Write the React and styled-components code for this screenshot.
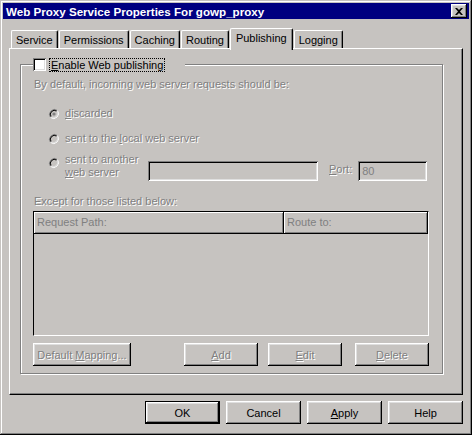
import React from "react";
import styled, { createGlobalStyle } from "styled-components";

const FACE = "#c6c3c0";
const SHADOW = "#808080";
const LIGHT = "#dfdfdf";

const Global = createGlobalStyle`
  html, body {
    margin: 0;
    padding: 0;
    background: ${FACE};
  }
  * {
    box-sizing: border-box;
  }
  body {
    font-family: "Liberation Sans", Arial, sans-serif;
    font-size: 11px;
    color: #000;
  }
`;

const Frame = styled.div`
  width: 472px;
  height: 435px;
  padding: 3px;
  background: ${FACE};
  display: flex;
  flex-direction: column;
  box-shadow: inset -1px -1px #000, inset 1px 1px ${FACE},
    inset -2px -2px ${SHADOW}, inset 2px 2px #fff;
`;

const TitleBar = styled.div`
  height: 18px;
  background: #000080;
  display: flex;
  align-items: center;
  justify-content: space-between;
  padding: 0 2px 0 3px;
`;

const Title = styled.span`
  color: #fff;
  font-weight: bold;
  font-size: 11.6px;
`;

const CloseBox = styled.div`
  width: 16px;
  height: 14px;
  background: ${FACE};
  display: flex;
  align-items: center;
  justify-content: center;
  box-shadow: inset -1px -1px #000, inset 1px 1px #fff,
    inset -2px -2px ${SHADOW}, inset 2px 2px ${LIGHT};
`;

const Body = styled.div`
  flex: 1;
  display: flex;
  flex-direction: column;
  padding: 8px 6px 8px 6px;
`;

const TabStrip = styled.div`
  display: flex;
  align-items: flex-end;
  padding-left: 2px;
  height: 21px;
  position: relative;
  z-index: 1;
`;

const Tab = styled.div`
  height: ${p => (p.$active ? 22 : 18)}px;
  margin: 0 ${p => (p.$active ? 1 : 1)}px -${p => (p.$active ? 2 : 0)}px 0;
  padding: ${p => (p.$active ? "3px 5px 0 5px" : "1px 4px 0 4px")};
  background: ${FACE};
  display: flex;
  align-items: ${p => (p.$active ? "flex-start" : "center")};
  border-left: 1px solid #fff;
  border-top: 1px solid #fff;
  border-right: 1px solid #000;
  border-top-left-radius: 2px;
  border-top-right-radius: 2px;
  box-shadow: inset -1px 0 ${SHADOW};
  white-space: nowrap;
`;

const Panel = styled.div`
  height: 347px;
  border: 1px solid;
  border-color: #fff #000 #000 #fff;
  box-shadow: inset -1px -1px ${SHADOW};
  padding: 9px 20px 0 10px;
`;

const Group = styled.fieldset`
  margin: 0;
  width: 423px;
  height: 316px;
  padding: 7px 0 0 12px;
  border: 1px solid ${SHADOW};
  box-shadow: 1px 1px 0 #fff, inset 1px 1px 0 #fff;
  display: flex;
  flex-direction: column;
  min-width: 0;
`;

const Legend = styled.legend`
  padding: 0 21px 0 0;
  background: ${FACE};
  display: flex;
  align-items: center;
  height: 13px;
`;

const CheckBox = styled.span`
  width: 13px;
  height: 13px;
  background: #fff;
  box-shadow: inset 1px 1px ${SHADOW}, inset -1px -1px #fff,
    inset 2px 2px #000, inset -2px -2px ${LIGHT};
  margin-right: 4px;
`;

const FocusLabel = styled.span`
  outline: 1px dotted #000;
  padding: 0 1px;
  line-height: 12px;
`;

const Dim = styled.span`
  color: ${SHADOW};
  text-shadow: 1px 1px 0 #fff;
  line-height: 13px;
  white-space: nowrap;
`;

const Note = styled(Dim)`
  display: block;
  margin: ${p => p.$mt || 0}px 0 0 1px;
`;

const Key = styled.u`
  text-decoration-thickness: 1px;
  text-underline-offset: 1px;
`;

const RadioList = styled.div`
  display: flex;
  flex-direction: column;
  padding-left: 15px;
  margin-top: 16px;
`;

const RadioRow = styled.div`
  display: flex;
  align-items: flex-start;
  margin-bottom: ${p => p.$mb || 0}px;
`;

const RadioMark = styled.svg`
  width: 12px;
  height: 12px;
  margin: ${p => p.$mt || 0}px 5px 0 0;
  flex: none;
`;

const RadioLabel = styled(Dim)`
  width: ${p => p.$w || "auto"};
  white-space: normal;
  display: block;
`;

const Field = styled.div`
  width: ${p => p.$w}px;
  height: 20px;
  margin-top: ${p => p.$mt || 0}px;
  padding: 3px 4px;
  box-shadow: inset 1px 1px ${SHADOW}, inset -1px -1px #fff,
    inset 2px 2px #000, inset -2px -2px ${LIGHT};
  color: ${SHADOW};
  line-height: 14px;
`;

const PortLabel = styled(Dim)`
  margin: 10px 6px 0 11px;
`;

const List = styled.div`
  margin: 3px 0 0 0;
  width: 396px;
  height: 125px;
  border: 1px solid;
  border-color: #000 #fff #fff #000;
  display: flex;
  flex-direction: column;
`;

const HeaderRow = styled.div`
  display: flex;
  height: 22px;
`;

const HeaderCell = styled.div`
  width: ${p => p.$w}px;
  flex: ${p => (p.$w ? "none" : 1)};
  padding: 4px 0 0 3px;
  border-right: 1px solid #000;
  border-bottom: 1px solid #000;
  box-shadow: inset 1px 1px #fff, inset -1px -1px ${SHADOW};
  color: ${SHADOW};
  line-height: 13px;
`;

const ButtonRow = styled.div`
  display: flex;
  align-items: center;
  margin-top: ${p => p.$mt || 0}px;
  justify-content: ${p => (p.$end ? "flex-end" : "flex-start")};
  gap: ${p => p.$gap || 0}px;
`;

const Button = styled.button`
  width: ${p => p.$w || 75}px;
  height: 23px;
  margin-left: ${p => p.$ml || 0}px;
  padding: 0;
  font: inherit;
  background: ${FACE};
  border: ${p => (p.$default ? "1px solid #000" : "none")};
  box-shadow: inset -1px -1px #000, inset 1px 1px #fff,
    inset -2px -2px ${SHADOW}, inset 2px 2px ${LIGHT};
  color: ${p => (p.disabled ? SHADOW : "#000")};
  text-shadow: ${p => (p.disabled ? "1px 1px 0 #fff" : "none")};
  text-align: center;
`;

const Radio = ({ checked, mt }) => (
  <RadioMark $mt={mt} viewBox="0 0 12 12">
    <circle cx="6" cy="6" r="4.5" fill={FACE} />
    <path d="M2.5 9.5A5 5 0 0 1 9.5 2.5" stroke={SHADOW} fill="none" />
    <path d="M3.2 8.8A4 4 0 0 1 8.8 3.2" stroke="#000" fill="none" />
    <path d="M2.5 9.5A5 5 0 0 0 9.5 2.5" stroke="#fff" fill="none" />
    <path d="M3.2 8.8A4 4 0 0 0 8.8 3.2" stroke={LIGHT} fill="none" />
    {checked && <circle cx="6" cy="6" r="1.6" fill={SHADOW} />}
  </RadioMark>
);

const tabs = ["Service", "Permissions", "Caching", "Routing", "Publishing", "Logging"];

export default function App() {
  return (
    <>
      <Global />
      <Frame>
        <TitleBar>
          <Title>Web Proxy Service Properties For gowp_proxy</Title>
          <CloseBox>
            <svg width="8" height="7" viewBox="0 0 8 7">
              <path d="M0 0h2l2 2 2-2h2L5 3.5 8 7H6L4 5 2 7H0l3-3.5z" fill="#000" />
            </svg>
          </CloseBox>
        </TitleBar>
        <Body>
          <TabStrip>
            {tabs.map(t => (
              <Tab key={t} $active={t === "Publishing"}>{t}</Tab>
            ))}
          </TabStrip>
          <Panel>
            <Group>
              <Legend>
                <CheckBox />
                <FocusLabel><Key>E</Key>nable Web publishing</FocusLabel>
              </Legend>
              <Note>By default, incoming web server requests should be:</Note>
              <RadioList>
                <RadioRow $mb={12}>
                  <Radio checked mt={1} />
                  <Dim><Key>d</Key>iscarded</Dim>
                </RadioRow>
                <RadioRow $mb={8}>
                  <Radio mt={1} />
                  <Dim>sent to the <Key>l</Key>ocal web server</Dim>
                </RadioRow>
                <RadioRow>
                  <Radio mt={4} />
                  <RadioLabel $w="83px">sent to another<br /><Key>w</Key>eb server</RadioLabel>
                  <Field $w={170} $mt={8} />
                  <PortLabel><Key>P</Key>ort:</PortLabel>
                  <Field $w={69} $mt={8}>80</Field>
                </RadioRow>
              </RadioList>
              <Note $mt={14}>Except for those listed below:</Note>
              <List>
                <HeaderRow>
                  <HeaderCell $w={250}>Request Path:</HeaderCell>
                  <HeaderCell>Route to:</HeaderCell>
                </HeaderRow>
              </List>
              <ButtonRow $mt={7}>
                <Button disabled $w={98}>Default <Key>M</Key>apping...</Button>
                <Button disabled $w={74} $ml={53}><Key>A</Key>dd</Button>
                <Button disabled $w={74} $ml={10}><Key>E</Key>dit</Button>
                <Button disabled $w={74} $ml={13}><Key>D</Key>elete</Button>
              </ButtonRow>
            </Group>
          </Panel>
          <ButtonRow $mt={6} $end $gap={6}>
            <Button $default>OK</Button>
            <Button>Cancel</Button>
            <Button><Key>A</Key>pply</Button>
            <Button>Help</Button>
          </ButtonRow>
        </Body>
      </Frame>
    </>
  );
}
